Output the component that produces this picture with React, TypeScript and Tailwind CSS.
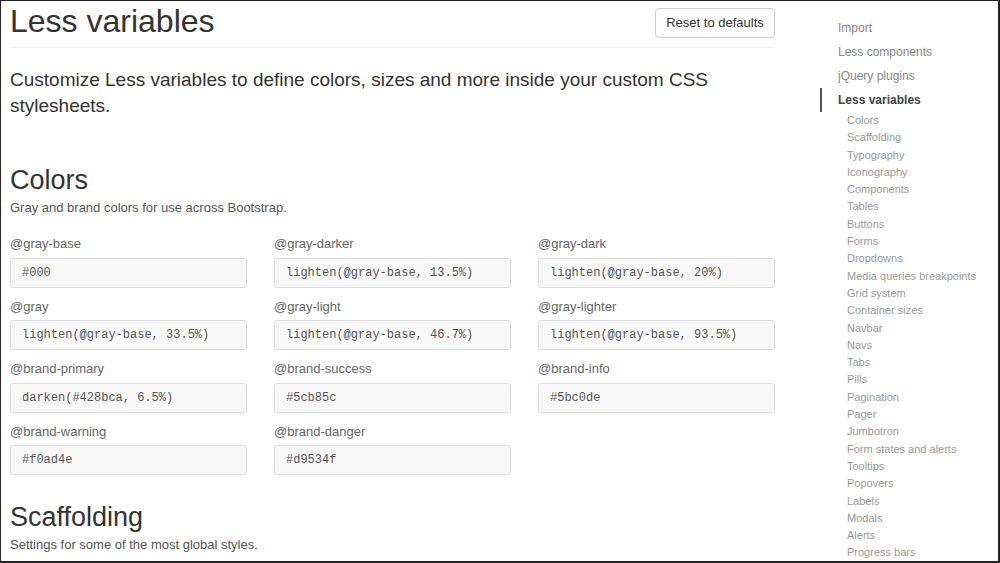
import React from 'react';

const colorVars: { name: string; value: string }[] = [
  { name: '@gray-base', value: '#000' },
  { name: '@gray-darker', value: 'lighten(@gray-base, 13.5%)' },
  { name: '@gray-dark', value: 'lighten(@gray-base, 20%)' },
  { name: '@gray', value: 'lighten(@gray-base, 33.5%)' },
  { name: '@gray-light', value: 'lighten(@gray-base, 46.7%)' },
  { name: '@gray-lighter', value: 'lighten(@gray-base, 93.5%)' },
  { name: '@brand-primary', value: 'darken(#428bca, 6.5%)' },
  { name: '@brand-success', value: '#5cb85c' },
  { name: '@brand-info', value: '#5bc0de' },
  { name: '@brand-warning', value: '#f0ad4e' },
  { name: '@brand-danger', value: '#d9534f' },
];

const topNav = ['Import', 'Less components', 'jQuery plugins'];

const subNav = [
  'Colors',
  'Scaffolding',
  'Typography',
  'Iconography',
  'Components',
  'Tables',
  'Buttons',
  'Forms',
  'Dropdowns',
  'Media queries breakpoints',
  'Grid system',
  'Container sizes',
  'Navbar',
  'Navs',
  'Tabs',
  'Pills',
  'Pagination',
  'Pager',
  'Jumbotron',
  'Form states and alerts',
  'Tooltips',
  'Popovers',
  'Labels',
  'Modals',
  'Alerts',
  'Progress bars',
];

const VarField: React.FC<{ name: string; value: string }> = ({ name, value }) => (
  <div className="mb-[10px]">
    <label className="block text-[13px] leading-[18px] text-[#666] mb-[4.5px]">{name}</label>
    <div className="h-[30px] rounded-[3px] border border-[#dcdcdc] bg-[#f8f8f8] px-[11px] flex items-center font-['Liberation_Mono',monospace] text-[12px] text-[#555]">
      {value}
    </div>
  </div>
);

export default function App() {
  return (
    <div className="w-[1000px] h-[563px] overflow-hidden bg-white border-t border-l border-r-2 border-b-2 border-[#222] font-['Liberation_Sans',Arial,sans-serif] text-[#333]">
      <div className="flex">
        {/* main column */}
        <div className="w-[765px] ml-[9px] shrink-0">
          <div className="flex items-start justify-between">
            <h1 className="text-[32px] leading-[40px] text-[#333]">Less variables</h1>
            <button className="mt-[7px] h-[30px] w-[120px] rounded-[4px] border border-[#ccc] bg-white text-[13px] text-[#333]">
              Reset to defaults
            </button>
          </div>
          <div className="mt-[6px] border-t border-[#eee]" />

          <p className="mt-[19px] text-[19px] leading-[26px] text-[#333]">
            Customize Less variables to define colors, sizes and more inside your custom CSS stylesheets.
          </p>

          {/* Colors */}
          <h2 className="mt-[45.7px] text-[27px] leading-[30px] text-[#333]">Colors</h2>
          <p className="mt-[4.8px] text-[13px] leading-[18px] text-[#555]">
            Gray and brand colors for use across Bootstrap.
          </p>
          <div className="mt-[18px] grid grid-cols-3 gap-x-[27px]">
            {colorVars.map((v) => (
              <VarField key={v.name} name={v.name} value={v.value} />
            ))}
          </div>

          {/* Scaffolding */}
          <h2 className="mt-[17px] text-[27px] leading-[30px] text-[#333]">Scaffolding</h2>
          <p className="mt-[3.8px] text-[13px] leading-[18px] text-[#555]">
            Settings for some of the most global styles.
          </p>
        </div>

        {/* side nav */}
        <nav className="ml-[45px] pt-[15px] w-[170px] shrink-0">
          {topNav.map((item) => (
            <div key={item} className="pl-[18px] text-[12px] leading-[24px] text-[#888]">
              {item}
            </div>
          ))}
          <div className="border-l-2 border-[#555] pl-[16px] text-[12px] leading-[24px] font-bold text-[#444]">
            Less variables
          </div>
          {subNav.map((item) => (
            <div key={item} className="pl-[27px] text-[11px] leading-[17.3px] text-[#999]">
              {item}
            </div>
          ))}
        </nav>
      </div>
    </div>
  );
}
